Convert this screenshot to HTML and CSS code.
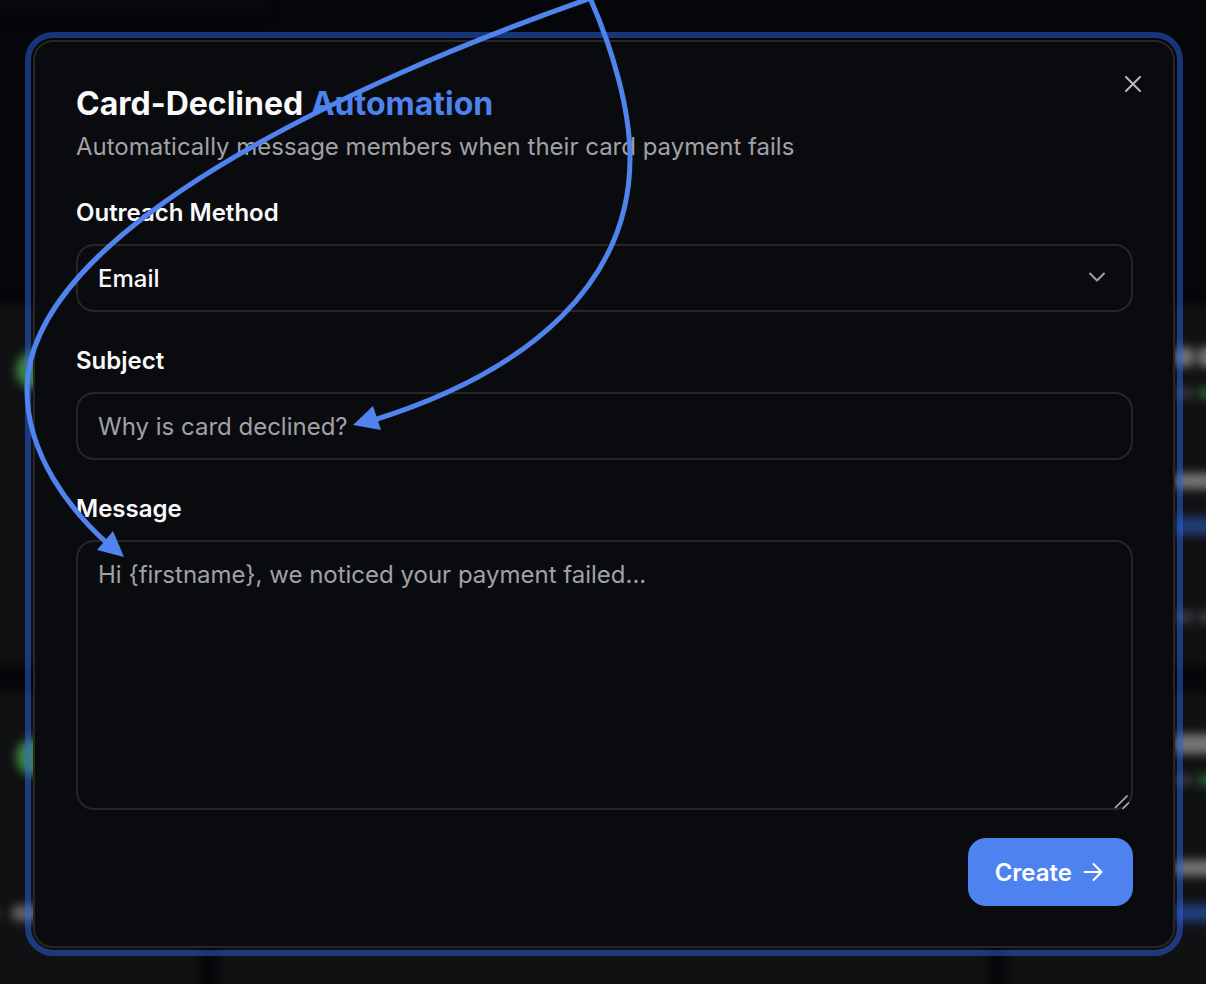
FILE: index.html
```html
<!DOCTYPE html>
<html lang="en">
<head>
    <meta charset="UTF-8">
    <meta name="viewport" content="width=device-width, initial-scale=1.0">
    <title>Card-Declined Automation</title>
    <link rel="stylesheet" href="styles.css">
</head>
<body>

    <!-- Dashboard cards, blurred behind the dialog -->
    <div class="dashboard" aria-hidden="true">
        <div class="toolbar"></div>
        <div class="card card-left">
            <div class="status-dot"></div>
        </div>
        <div class="card"></div>
        <div class="card card-right">
            <div class="bar title"><i></i><i></i></div>
            <div class="bar rate"><i></i><i></i></div>
            <div class="bar value"><i></i></div>
            <div class="bar link"><i></i></div>
            <div class="bar note"><i></i><i></i></div>
        </div>
        <div class="card card-left">
            <div class="status-dot"></div>
            <div class="bar caption"><i></i><i></i></div>
        </div>
        <div class="card"></div>
        <div class="card card-right">
            <div class="bar title"><i></i></div>
            <div class="bar rate"><i></i><i></i></div>
            <div class="bar value"><i></i></div>
            <div class="bar link"><i></i></div>
        </div>
    </div>

    <main class="overlay">
        <form class="modal" role="dialog" aria-labelledby="title" onsubmit="return false">
            <button type="button" class="close" aria-label="Close">
                <svg width="16" height="16" viewBox="0 0 16 16" fill="none" stroke="currentColor" stroke-width="2" stroke-linecap="round">
                    <path d="M1 1l14 14M15 1L1 15"/>
                </svg>
            </button>

            <h1 id="title">Card-Declined <span>Automation</span></h1>
            <p class="subtitle">Automatically message members when their card payment fails</p>

            <div class="field">
                <label for="method">Outreach Method</label>
                <div class="control">
                    <select id="method">
                        <option>Email</option>
                        <option>SMS</option>
                    </select>
                    <svg class="chevron" width="16" height="10" viewBox="0 0 16 10" fill="none" stroke="currentColor" stroke-width="2" stroke-linecap="round" stroke-linejoin="round">
                        <path d="M1 1.5l7 7 7-7"/>
                    </svg>
                </div>
            </div>

            <div class="field">
                <label for="subject">Subject</label>
                <input type="text" id="subject" placeholder="Why is card declined?">
            </div>

            <div class="field">
                <label for="message">Message</label>
                <div class="control">
                    <textarea id="message" placeholder="Hi {firstname}, we noticed your payment failed..."></textarea>
                    <svg class="grip" width="16" height="16" viewBox="0 0 16 16" fill="none" stroke="currentColor" stroke-width="1.6">
                        <path d="M1 14L13.5 1.5M8.5 15L15 8.5"/>
                    </svg>
                </div>
            </div>

            <button type="submit" class="create">
                Create
                <svg width="20" height="20" viewBox="0 0 20 20" fill="none" stroke="currentColor" stroke-width="2" stroke-linecap="round" stroke-linejoin="round">
                    <path d="M1.5 10h17M10.500 2l8 8-8 8"/>
                </svg>
            </button>
        </form>
    </main>

    <!-- Arrows pointing to the subject and message fields -->
    <svg class="arrows" width="1206" height="984" viewBox="0 0 1206 984" aria-hidden="true">
        <path class="line" d="M590 -2C612 48 630 108 630 158C630 280 534 370 374 420"/>
        <path class="head" d="M353 425L373 406L381 430Z"/>
        <path class="line" d="M594 -3C344 84 27 234 27 390C27 455 70 510 108 544"/>
        <path class="head" d="M124 557L113 531L97 550Z"/>
    </svg>

</body>
</html>
```

FILE: styles.css
```css
* {
    box-sizing: border-box;
}
body {
    margin: 0;
    min-height: 100vh;
    position: relative;
    overflow: hidden;
    font-family: Inter, "Liberation Sans", sans-serif;
    font-size: 24px;
    background: #050609;
    color: #fafafa;
}

/* Background */
.dashboard {
    position: absolute;
    inset: 0 -20px -40px;
    display: grid;
    grid-template-columns: 220px 1fr 220px;
    grid-template-rows: 14px 626px 1fr;
    gap: 26px 18px;
    filter: blur(5px);
}
.toolbar {
    grid-column: 1 / -1;
    width: 290px;
    background: #090a0d;
    border-radius: 0 0 12px 0;
}
.card {
    background: #101112;
}
.card:nth-child(-n+4) {
    margin-top: 265px;
}
.card-left {
    padding: 46px 0 0 36px;
}
.card-right {
    padding: 42px 0 0 168px;
}
.status-dot {
    width: 38px;
    height: 38px;
    border-radius: 50%;
    background: #3c8643;
}
.bar {
    display: flex;
    gap: 4px;
    height: 12px;
}
.bar i {
    flex: 1;
    border-radius: 6px;
    background: #747474;
}
.bar i:first-child:not(:last-child) {
    flex: none;
    width: 20px;
}
.title {
    height: 20px;
}
.rate {
    margin-top: 20px;
}
.rate i {
    background: #28602e;
}
.rate i:first-child {
    background: #33343a;
}
.value {
    margin-top: 74px;
    height: 16px;
}
.link {
    margin-top: 28px;
    height: 18px;
}
.link i {
    background: #213c78;
}
.note {
    margin-top: 76px;
}
.note i {
    background: #3b3c40;
}
.caption {
    margin: 129px 100px 0 -40px;
    height: 16px;
    gap: 16px;
}
.caption i {
    background: #626264;
}

/* Dialog */
.overlay {
    position: relative;
    padding: 40px 31px 36px 33px;
}
.modal {
    position: relative;
    display: flex;
    flex-direction: column;
    padding: 40px 40px 40px 41px;
    background: #0a0b0f;
    border: 2px solid #262626;
    border-radius: 20px;
    outline: 6px solid rgba(43, 99, 235, 0.5);
    outline-offset: 2px;
}
h1 {
    margin: 0 0 4px;
    font-size: 32px;
    font-weight: 700;
    line-height: 44px;
}
h1 span {
    color: #4e82ee;
}
.subtitle {
    margin: 0;
    line-height: 34px;
    color: #a1a1a6;
}
.field {
    margin-top: 37px;
}
label {
    display: block;
    margin-bottom: 19px;
    font-weight: 600;
    line-height: 24px;
}
.control {
    position: relative;
}
select, input, textarea {
    display: block;
    width: 100%;
    height: 68px;
    padding: 0 20px;
    font: inherit;
    color: #fafafa;
    background: transparent;
    border: 2px solid #262626;
    border-radius: 18px;
    appearance: none;
}
select {
    font-weight: 500;
}
textarea {
    height: 270px;
    padding: 16px 20px;
    line-height: 34px;
    resize: none;
}
::placeholder {
    color: #a1a1a6;
    opacity: 1;
}
.chevron {
    position: absolute;
    right: 28px;
    top: 28px;
    color: #a1a1a1;
    pointer-events: none;
}
.grip {
    position: absolute;
    right: 3px;
    bottom: 0;
    color: #b4b4b4;
    pointer-events: none;
}
button {
    font: inherit;
    border: none;
    cursor: pointer;
}
.close {
    position: absolute;
    top: 26px;
    right: 24px;
    display: flex;
    padding: 8px;
    color: #b8b8ba;
    background: none;
}
.create {
    display: flex;
    align-items: center;
    align-self: flex-end;
    gap: 11px;
    height: 68px;
    margin-top: 28px;
    padding: 0 30px 0 27px;
    font-weight: 600;
    color: #ffffff;
    background: #4e82ee;
    border-radius: 18px;
}
.create:hover {
    background: #3f73e0;
}

/* Arrows */
.arrows {
    position: absolute;
    top: 0;
    left: 0;
    pointer-events: none;
}
.line {
    fill: none;
    stroke: #5083ed;
    stroke-width: 5;
}
.head {
    fill: #5083ed;
}
```
